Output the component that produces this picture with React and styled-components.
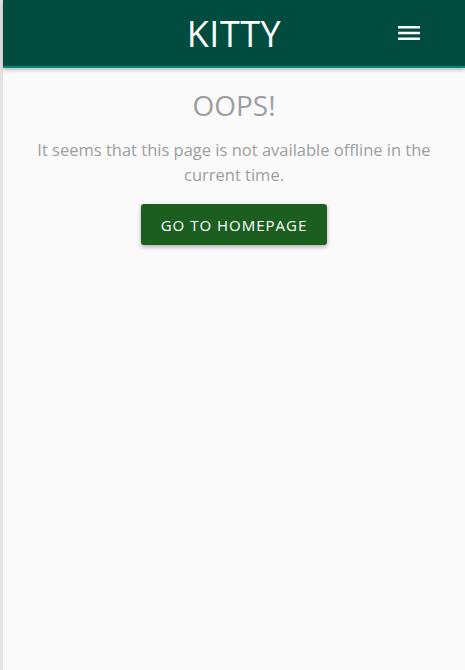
import React from 'react'
import styled, { createGlobalStyle } from 'styled-components';

const GlobalStyle = createGlobalStyle`
html, body {
  margin: 0;
  padding: 0;
  height: 100%;
}
body {
  background: #fafafa;
  font-family: "Open Sans", "Noto Sans", sans-serif;
}
#root {
  min-height: 100%;
}
`;

const Page = styled.div`
min-height: 670px;
border-left: 3px solid #e3e3e3;
box-sizing: border-box;
background: #fafafa;
`;

const Header = styled.header`
height: 66px;
background: #004d40;
border-bottom: 2px solid #00897b;
box-shadow: 0 2px 4px rgba(0,0,0,0.25);
display: grid;
grid-template-columns: 1fr auto 1fr;
align-items: center;
`;

const Title = styled.h1`
grid-column: 2;
margin: 0;
color: #fff;
font-size: 36px;
font-weight: 400;
letter-spacing: 0.5px;
`;

const MenuButton = styled.button`
justify-self: end;
margin-right: 44px;
background: none;
border: none;
padding: 0;
width: 24px;
height: 24px;
display: flex;
align-items: center;
justify-content: center;
cursor: pointer;
`;

const Main = styled.main`
display: flex;
flex-direction: column;
align-items: center;
padding: 17px 20px;
text-align: center;
`;

const Heading = styled.h2`
margin: 0;
color: #9e9e9e;
font-size: 28px;
font-weight: 400;
line-height: 40px;
`;

const Message = styled.p`
margin: 12px 0 17px;
color: #9e9e9e;
font-size: 16.5px;
line-height: 25px;
max-width: 410px;
`;

const HomeButton = styled.a`
display: inline-flex;
align-items: center;
justify-content: center;
height: 41px;
padding: 0 20px;
background: #1b5e20;
color: #fff;
font-size: 15px;
letter-spacing: 1px;
text-transform: uppercase;
text-decoration: none;
border-radius: 3px;
box-shadow: 0 2px 4px rgba(0,0,0,0.3);
`;

const MenuIcon = () => (
  <svg width="24" height="24" viewBox="0 0 24 24">
    <path d="M1 5h22v2.6H1zM1 10.7h22v2.6H1zM1 16.4h22V19H1z" fill="#fff" />
  </svg>
);

const App = () => {
  return (
    <Page>
      <GlobalStyle />
      <Header>
        <Title>KITTY</Title>
        <MenuButton aria-label="menu"><MenuIcon /></MenuButton>
      </Header>
      <Main>
        <Heading>OOPS!</Heading>
        <Message>It seems that this page is not available offline in the current time.</Message>
        <HomeButton href="#">Go to homepage</HomeButton>
      </Main>
    </Page>
  )
}

export default App
